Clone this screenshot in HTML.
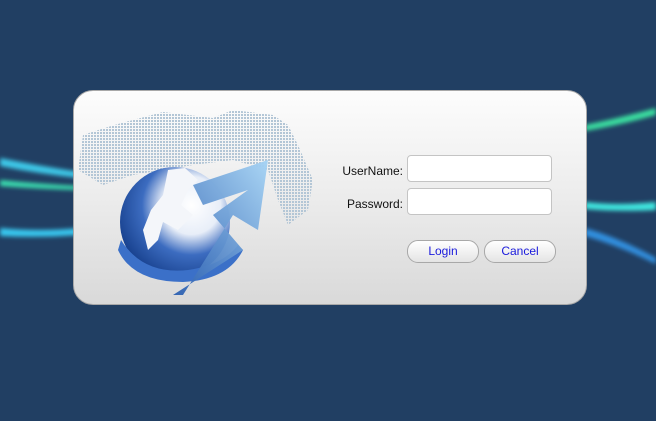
<!DOCTYPE html>
<html><head><style>
body{margin:0;width:656px;height:421px;background:#213f63;overflow:hidden;position:relative;font-family:"Liberation Sans",sans-serif}
#bg{position:absolute;left:0;top:0}
.panel{position:absolute;left:73px;top:90px;width:512px;height:213px;border:1px solid #a9a9a9;border-radius:20px;background:linear-gradient(#fdfdfd,#ececec 50%,#d9d9d9)}
.lbl{position:absolute;font-size:12px;color:#111;text-align:right;width:80px}
.inp{position:absolute;left:407px;width:143px;height:25px;border:1px solid #c4c4c4;border-radius:4px;background:#fff}
.btn{position:absolute;top:240px;height:21px;border:1px solid #a8a8a8;border-radius:11px;background:linear-gradient(#fff,#e4e4e4);color:#1a1adc;font-size:12px;text-align:center;line-height:21px}
</style></head><body>
<svg id="bg" width="656" height="421">
<defs>
<filter id="bl"><feGaussianBlur stdDeviation="2"/></filter>
<pattern id="dots" width="3" height="3" patternUnits="userSpaceOnUse"><rect width="2" height="2" fill="#b3c6d6"/></pattern>
<radialGradient id="gl" cx=".65" cy=".35" r=".75"><stop offset="0" stop-color="#fff"/><stop offset=".35" stop-color="#e8eef8"/><stop offset=".6" stop-color="#3c6cc0"/><stop offset="1" stop-color="#123a86"/></radialGradient>
<linearGradient id="ar" x1="0" x2="1" y1="1" y2="0"><stop offset="0" stop-color="#2a5eb0"/><stop offset="1" stop-color="#a6d4f5"/></linearGradient>
</defs>
<g filter="url(#bl)">
<path d="M0 158 Q40 166 80 172 L80 178 Q40 174 0 166Z" fill="#3cc8e8"/>
<path d="M0 180 Q40 184 80 186 L80 190 Q40 189 0 186Z" fill="#3ae0b0"/>
<path d="M0 228 Q40 232 80 228 L80 235 Q40 238 0 236Z" fill="#38c8f0"/>
<path d="M585 125 Q620 118 656 108 L656 115 Q620 125 585 131Z" fill="#3ae0a0"/>
<path d="M585 202 Q620 206 656 202 L656 210 Q620 212 585 209Z" fill="#40e8e0"/>
<path d="M585 228 Q620 238 656 258 L656 264 Q620 246 585 236Z" fill="#3090e0"/>
</g>
</svg>
<div class="panel"></div>
<svg style="position:absolute;left:73px;top:90px" width="260" height="214">
<path d="M10 45 Q40 35 60 30 L90 22 L140 28 L160 20 L200 25 L215 35 L225 55 L240 90 L235 120 L215 135 L205 110 L195 80 L160 70 L120 75 L60 85 L30 95 L5 80Z" fill="url(#dots)"/>
<circle cx="102" cy="132" r="55" fill="url(#gl)"/>
<path d="M95 80 L112 78 L125 90 L115 100 L108 115 L120 125 L105 140 L90 132 L85 150 L75 160 L70 140 L78 120 L90 105Z" fill="#f4f6fa"/>
<path d="M48 150 Q70 185 115 180 Q150 175 165 155 L170 160 Q155 190 110 192 Q60 192 45 160Z" fill="#3b70c8"/>
<path d="M100 205 L170 160 L140 125 L175 100 L130 115 L120 95 L195 70 L185 140 L160 125 L110 205Z" fill="url(#ar)" opacity=".95"/>
</svg>
<div class="lbl" style="left:323px;top:164px">UserName:</div>
<div class="lbl" style="left:323px;top:197px">Password:</div>
<div class="inp" style="top:155px"></div>
<div class="inp" style="top:188px"></div>
<div class="btn" style="left:407px;width:70px">Login</div>
<div class="btn" style="left:484px;width:70px">Cancel</div>
</body></html>
